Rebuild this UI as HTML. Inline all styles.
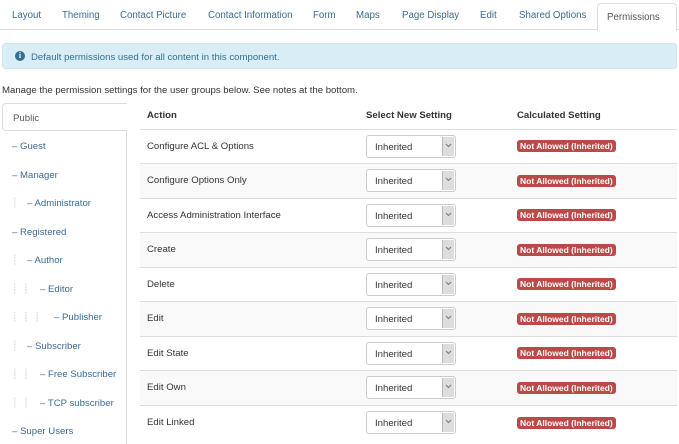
<!DOCTYPE html>
<html><head><meta charset="utf-8"><style>
*{box-sizing:border-box;margin:0;padding:0}
body{width:679px;height:444px;overflow:hidden;background:#fff;font-family:"Liberation Sans",sans-serif;font-size:9.6px;color:#333;position:relative}
.tabs{position:absolute;left:0;top:0;width:679px;height:30px;border-bottom:1px solid #ddd}
.tab{position:absolute;top:10px;color:#3b6b96;font-size:9.7px}
.active{position:absolute;left:597px;top:3px;width:80px;height:28px;border:1px solid #ddd;border-bottom:none;background:#fff;border-radius:4px 4px 0 0;color:#555;padding:8px 0 0 9px;font-size:9.7px}
.alert{position:absolute;left:2px;top:43px;width:675px;height:26px;background:#d9edf7;border:1px solid #cde6f0;border-radius:3px;color:#31708f;padding:8px 0 0 28px}
.ic{position:absolute;left:12px;top:7px;width:10px;height:10px;border-radius:50%;background:#31708f;color:#fff;font-size:8px;font-weight:bold;text-align:center;line-height:10px;font-family:"Liberation Serif",serif}
.manage{position:absolute;left:2px;top:85px}
.pub{position:absolute;left:2px;top:103px;width:125px;height:28px;border:1px solid #ddd;border-right:none;border-radius:4px 0 0 4px;padding:9px 0 0 10px;color:#555}
.nav{position:absolute;left:2px;top:131px;width:125px;height:313px;border-right:1px solid #ddd}
.n{position:absolute;color:#3b6b96}
.g{color:#ccc;position:absolute}
table{position:absolute;left:140px;top:103px;width:537px;border-collapse:collapse}
th{text-align:left;height:26px;font-weight:bold;padding-left:7px;border-bottom:1px solid #ddd}
td{height:34.5px;border-top:1px solid #ddd;padding-left:7px}
tr:nth-child(odd) td{background:#f9f9f9}
.sel{width:90px;height:23px;border:1px solid #ccc;border-radius:3px;background:#fff;position:relative;padding:6px 0 0 8px}
.sel svg{position:absolute;right:1px;top:1px}
.b{display:inline-block;background:#b94a48;color:#fff;font-weight:bold;font-size:8.5px;padding:1px 3px;border-radius:3px}
</style></head><body>
<div class="tabs">
<span class="tab" style="left:12px">Layout</span>
<span class="tab" style="left:62px">Theming</span>
<span class="tab" style="left:120px">Contact Picture</span>
<span class="tab" style="left:208px">Contact Information</span>
<span class="tab" style="left:313px">Form</span>
<span class="tab" style="left:356px">Maps</span>
<span class="tab" style="left:402px">Page Display</span>
<span class="tab" style="left:480px">Edit</span>
<span class="tab" style="left:519px">Shared Options</span>
<div class="active">Permissions</div>
</div>
<div class="alert"><span class="ic">i</span>Default permissions used for all content in this component.</div>
<div class="manage">Manage the permission settings for the user groups below. See notes at the bottom.</div>
<div class="pub">Public</div>
<div class="nav"></div>
<span class="n" style="left:12px;top:141px">– Guest</span>
<span class="n" style="left:12px;top:170px">– Manager</span>
<span class="g" style="left:12px;top:198px">┊</span><span class="n" style="left:27px;top:198px">– Administrator</span>
<span class="n" style="left:12px;top:227px">– Registered</span>
<span class="g" style="left:12px;top:255px">┊</span><span class="n" style="left:27px;top:255px">– Author</span>
<span class="g" style="left:12px;top:284px">┊&nbsp;&nbsp;┊</span><span class="n" style="left:40px;top:284px">– Editor</span>
<span class="g" style="left:12px;top:312px">┊&nbsp;&nbsp;┊&nbsp;&nbsp;┊</span><span class="n" style="left:54px;top:312px">– Publisher</span>
<span class="g" style="left:12px;top:341px">┊</span><span class="n" style="left:27px;top:341px">– Subscriber</span>
<span class="g" style="left:12px;top:369px">┊&nbsp;&nbsp;┊</span><span class="n" style="left:40px;top:369px">– Free Subscriber</span>
<span class="g" style="left:12px;top:398px">┊&nbsp;&nbsp;┊</span><span class="n" style="left:40px;top:398px">– TCP subscriber</span>
<span class="n" style="left:12px;top:426px">– Super Users</span>
<table>
<tr><th style="width:219px">Action</th><th style="width:151px">Select New Setting</th><th>Calculated Setting</th></tr>
<tr><td>Configure ACL &amp; Options</td><td><div class="sel">Inherited<svg width="12" height="19"><rect width="12" height="19" fill="#ddd"/><line x1="0.5" y1="0" x2="0.5" y2="19" stroke="#bbb"/><path d="M4 7l2.5 2.5L9 7" fill="none" stroke="#777" stroke-width="1"/></svg></div></td><td><span class="b">Not Allowed (Inherited)</span></td></tr>
<tr><td>Configure Options Only</td><td><div class="sel">Inherited<svg width="12" height="19"><rect width="12" height="19" fill="#ddd"/><line x1="0.5" y1="0" x2="0.5" y2="19" stroke="#bbb"/><path d="M4 7l2.5 2.5L9 7" fill="none" stroke="#777" stroke-width="1"/></svg></div></td><td><span class="b">Not Allowed (Inherited)</span></td></tr>
<tr><td>Access Administration Interface</td><td><div class="sel">Inherited<svg width="12" height="19"><rect width="12" height="19" fill="#ddd"/><line x1="0.5" y1="0" x2="0.5" y2="19" stroke="#bbb"/><path d="M4 7l2.5 2.5L9 7" fill="none" stroke="#777" stroke-width="1"/></svg></div></td><td><span class="b">Not Allowed (Inherited)</span></td></tr>
<tr><td>Create</td><td><div class="sel">Inherited<svg width="12" height="19"><rect width="12" height="19" fill="#ddd"/><line x1="0.5" y1="0" x2="0.5" y2="19" stroke="#bbb"/><path d="M4 7l2.5 2.5L9 7" fill="none" stroke="#777" stroke-width="1"/></svg></div></td><td><span class="b">Not Allowed (Inherited)</span></td></tr>
<tr><td>Delete</td><td><div class="sel">Inherited<svg width="12" height="19"><rect width="12" height="19" fill="#ddd"/><line x1="0.5" y1="0" x2="0.5" y2="19" stroke="#bbb"/><path d="M4 7l2.5 2.5L9 7" fill="none" stroke="#777" stroke-width="1"/></svg></div></td><td><span class="b">Not Allowed (Inherited)</span></td></tr>
<tr><td>Edit</td><td><div class="sel">Inherited<svg width="12" height="19"><rect width="12" height="19" fill="#ddd"/><line x1="0.5" y1="0" x2="0.5" y2="19" stroke="#bbb"/><path d="M4 7l2.5 2.5L9 7" fill="none" stroke="#777" stroke-width="1"/></svg></div></td><td><span class="b">Not Allowed (Inherited)</span></td></tr>
<tr><td>Edit State</td><td><div class="sel">Inherited<svg width="12" height="19"><rect width="12" height="19" fill="#ddd"/><line x1="0.5" y1="0" x2="0.5" y2="19" stroke="#bbb"/><path d="M4 7l2.5 2.5L9 7" fill="none" stroke="#777" stroke-width="1"/></svg></div></td><td><span class="b">Not Allowed (Inherited)</span></td></tr>
<tr><td>Edit Own</td><td><div class="sel">Inherited<svg width="12" height="19"><rect width="12" height="19" fill="#ddd"/><line x1="0.5" y1="0" x2="0.5" y2="19" stroke="#bbb"/><path d="M4 7l2.5 2.5L9 7" fill="none" stroke="#777" stroke-width="1"/></svg></div></td><td><span class="b">Not Allowed (Inherited)</span></td></tr>
<tr><td>Edit Linked</td><td><div class="sel">Inherited<svg width="12" height="19"><rect width="12" height="19" fill="#ddd"/><line x1="0.5" y1="0" x2="0.5" y2="19" stroke="#bbb"/><path d="M4 7l2.5 2.5L9 7" fill="none" stroke="#777" stroke-width="1"/></svg></div></td><td><span class="b">Not Allowed (Inherited)</span></td></tr>
</table>
</body></html>
